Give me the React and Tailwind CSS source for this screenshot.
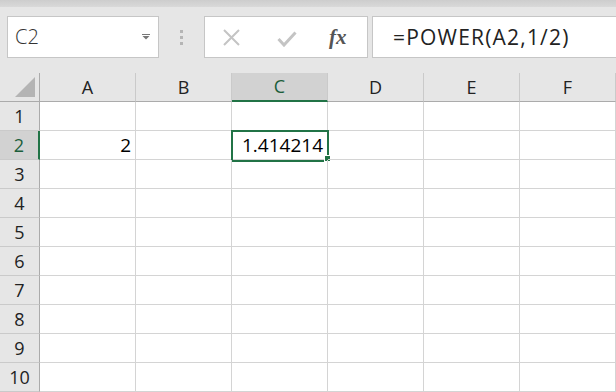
import React from "react";

const COLS = ["A", "B", "C", "D", "E", "F"];
const ROWS = [1, 2, 3, 4, 5, 6, 7, 8, 9, 10];

const cellValue = (row, col) => {
  if (row === 2 && col === "A") return "2";
  if (row === 2 && col === "C") return "1.414214";
  return "";
};

const App = () => {
  return (
    <div className="w-[616px] h-[392px] overflow-hidden bg-white font-['Open_Sans',sans-serif] text-[#222]">
      {/* window strip */}
      <div className="h-[7px] bg-gradient-to-b from-[#cdcdcd] to-[#d9d9d9]" />

      {/* formula bar */}
      <div className="h-[66px] bg-[#e6e6e6] flex items-start pt-[9px] pl-[7px] overflow-hidden">
        <div className="shrink-0 w-[152px] h-[42px] bg-white border border-[#c6c6c6] flex items-center justify-between pl-[7px] pr-[8px]">
          <span className="text-[20px] font-light leading-none text-[#333]">C2</span>
          <svg width="8" height="6" viewBox="0 0 8 6">
            <rect x="0" y="0" width="8" height="1" fill="#777" />
            <path d="M0.5 2 L7.5 2 L4 5.5 Z" fill="#777" />
          </svg>
        </div>
        <div className="shrink-0 w-[45px] h-[42px] flex flex-col items-center justify-center gap-[3px]">
          <div className="w-[3px] h-[3px] bg-[#b5b5b5]" />
          <div className="w-[3px] h-[3px] bg-[#b5b5b5]" />
          <div className="w-[3px] h-[3px] bg-[#b5b5b5]" />
        </div>
        <div className="shrink-0 w-[164px] h-[42px] bg-white border border-[#c6c6c6] flex items-center pl-[18px]">
          <svg width="17" height="17" viewBox="0 0 17 17">
            <path d="M1 1 L16 16 M16 1 L1 16" stroke="#c4c4c4" strokeWidth="2" />
          </svg>
          <svg width="20" height="16" viewBox="0 0 20 16" className="ml-[37px] mt-[4px]">
            <path d="M1.5 8 L7 14 L18.5 1.5" stroke="#c4c4c4" strokeWidth="3" fill="none" />
          </svg>
          <span className="ml-[32px] font-['Liberation_Serif',serif] italic font-semibold text-[21px] leading-none text-[#555]">
            fx
          </span>
        </div>
        <div className="shrink-0 ml-[4px] w-[260px] h-[42px] bg-white border border-[#c6c6c6] flex items-center pl-[20px]">
          <span className="text-[21px] leading-none tracking-[1.2px] text-[#222]">=POWER(A2,1/2)</span>
        </div>
      </div>

      {/* sheet */}
      <div className="grid grid-cols-[40px_repeat(6,96px)]">
        {/* header row */}
        <div className="h-[29px] bg-[#e6e6e6] border-r border-b border-[#ababab] flex items-end justify-end pr-[4px] pb-[4px]">
          <svg width="20" height="20" viewBox="0 0 20 20">
            <path d="M20 0 L20 20 L0 20 Z" fill="#b4b4b4" />
          </svg>
        </div>
        {COLS.map((c) => (
          <div
            key={c}
            className={`h-[29px] flex items-center justify-center text-[18px] border-r border-[#cacaca] ${
              c === "C"
                ? "bg-[#d2d2d2] border-b-2 border-b-[#217346] text-[#1b5e3a]"
                : "bg-[#e6e6e6] border-b border-b-[#ababab]"
            }`}
          >
            {c}
          </div>
        ))}

        {/* body rows */}
        {ROWS.map((r) => (
          <React.Fragment key={r}>
            <div
              className={`h-[29px] flex items-center justify-center text-[18px] border-b border-[#cacaca] ${
                r === 2
                  ? "bg-[#d2d2d2] border-r-2 border-r-[#217346] text-[#1b5e3a]"
                  : "bg-[#e6e6e6] border-r border-r-[#ababab]"
              }`}
            >
              {r}
            </div>
            {COLS.map((c) => {
              const selected = r === 2 && c === "C";
              return (
                <div
                  key={c}
                  className="relative h-[29px] border-r border-b border-[#d4d4d4] flex items-center justify-end pr-[4px] text-[19px] text-black"
                >
                  {cellValue(r, c)}
                  {selected && (
                    <>
                      <div className="absolute -left-[1px] -top-[1px] w-[98px] h-[32px] border-2 border-[#217346]" />
                      <div className="absolute -right-[4px] -bottom-[3px] w-[7px] h-[7px] bg-[#217346] border border-white" />
                    </>
                  )}
                </div>
              );
            })}
          </React.Fragment>
        ))}
      </div>
    </div>
  );
};

export default App;
